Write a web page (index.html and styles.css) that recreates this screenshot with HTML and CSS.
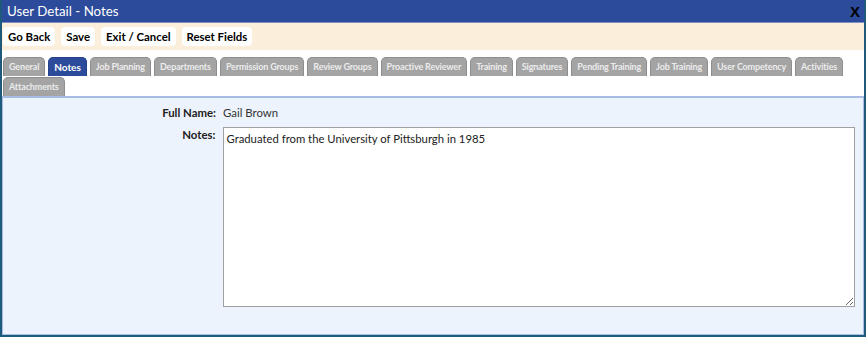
FILE: index.html
```html
<!DOCTYPE html>
<html>
<head>
<meta charset="utf-8">
<link rel="stylesheet" href="styles.css">
</head>
<body>
<div class="window">
  <div class="titlebar">
    <span class="title">User Detail - Notes</span>
    <span class="close">X</span>
  </div>
  <div class="toolbar">
    <button class="btn">Go Back</button>
    <button class="btn">Save</button>
    <button class="btn">Exit / Cancel</button>
    <button class="btn">Reset Fields</button>
  </div>
  <div class="tabs">
    <span class="tab">General</span>
    <span class="tab active">Notes</span>
    <span class="tab">Job Planning</span>
    <span class="tab">Departments</span>
    <span class="tab">Permission Groups</span>
    <span class="tab">Review Groups</span>
    <span class="tab">Proactive Reviewer</span>
    <span class="tab">Training</span>
    <span class="tab">Signatures</span>
    <span class="tab">Pending Training</span>
    <span class="tab">Job Training</span>
    <span class="tab">User Competency</span>
    <span class="tab">Activities</span>
    <span class="tab">Attachments</span>
  </div>
  <div class="panel">
    <div class="row">
      <label class="lbl">Full Name:</label>
      <span class="val">Gail Brown</span>
    </div>
    <div class="row">
      <label class="lbl">Notes:</label>
      <textarea class="notes">Graduated from the University of Pittsburgh in 1985</textarea>
    </div>
  </div>
</div>
</body>
</html>
```
FILE: styles.css
```css
* { box-sizing: border-box; }
html, body { margin: 0; padding: 0; background: #ffffff; }
body { font-family: "Lato", "Open Sans", sans-serif; }
.window {
  width: 866px;
  height: 337px;
  border: 2px solid #1e5a7c;
  border-top: none;
  display: flex;
  flex-direction: column;
  overflow: hidden;
}
.titlebar {
  height: 23px;
  background: #2d4b9b;
  display: flex;
  align-items: center;
  justify-content: space-between;
  padding: 0 4px 0 5px;
  border-bottom: 1px solid #7d8fc4;
}
.title { color: #ffffff; font-size: 13.3px; }
.close { color: #000000; font-weight: bold; font-size: 15px; font-family: "Liberation Sans", sans-serif; }
.toolbar {
  height: 27px;
  background: #fbeedb;
  display: flex;
  align-items: center;
  gap: 6px;
  padding: 0 1px;
}
.btn {
  font-family: inherit;
  font-weight: bold;
  font-size: 11.4px;
  color: #000;
  background: #ffffff;
  border: none;
  border-radius: 4px;
  height: 19px;
  padding: 0 5px;
  line-height: 19px;
}
.tabs {
  display: flex;
  flex-wrap: wrap;
  gap: 1px 3px;
  padding: 7px 0 0 1px;
  background: #ffffff;
}
.tab {
  height: 19px;
  background: #a4a4a4;
  color: #ececec;
  font-size: 9px;
  letter-spacing: -0.15px;
  font-weight: bold;
  line-height: 18px;
  padding: 0 5px;
  border-radius: 5px 5px 0 0;
  border: 1px solid #8e8e8e;
  border-bottom: none;
}
.tab.active { background: #2d4b9b; color: #ffffff; border-color: #23408a; font-size: 10px; letter-spacing: 0; }
.panel {
  flex: 1;
  background: #edf3fd;
  border: 1px solid #a9bde4;
  border-top: 2px solid #a9bde4;
  padding: 7px 8px 0 0;
}
.row { display: flex; align-items: flex-start; }
.lbl {
  width: 220px;
  text-align: right;
  font-weight: bold;
  font-size: 11.4px;
  color: #222;
  padding-right: 7px;
  line-height: 16px;
}
.val { font-size: 11.4px; color: #333; line-height: 16px; }
.row + .row { margin-top: 6px; }
.notes {
  width: 634px;
  height: 180px;
  font-family: inherit;
  font-size: 11.3px;
  color: #222;
  border: 1px solid #a0a0a0;
  padding: 4px 3px;
  resize: both;
  margin-top: 0;
}
```
